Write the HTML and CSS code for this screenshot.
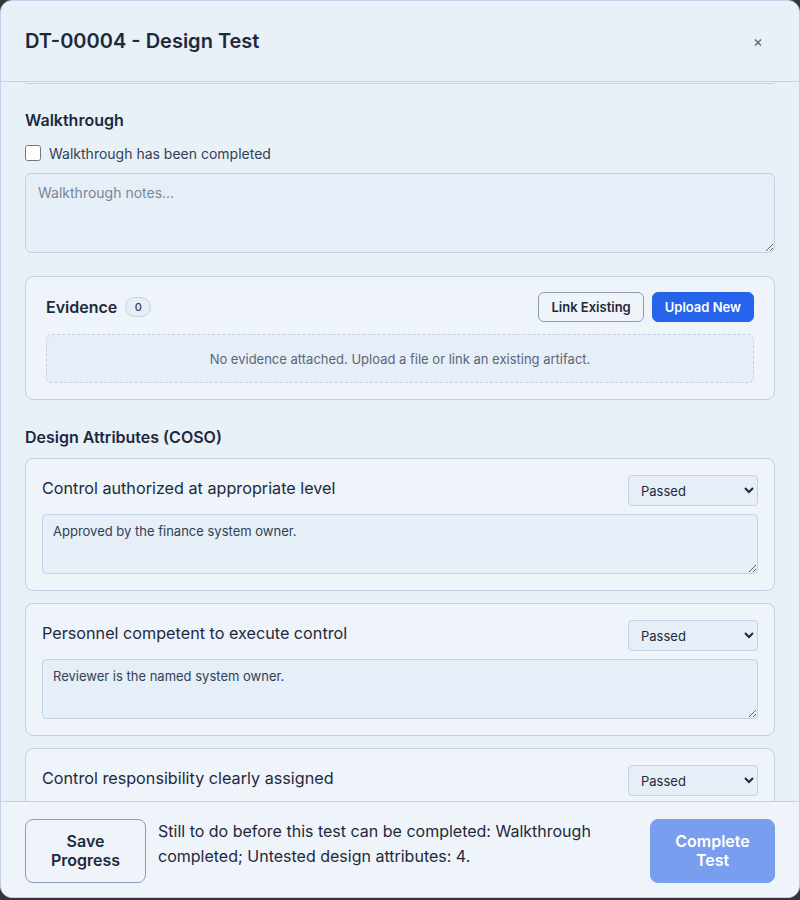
FILE: index.html
```html
<!DOCTYPE html>
<html lang="en">
<head>
    <meta charset="UTF-8">
    <meta name="viewport" content="width=device-width, initial-scale=1.0">
    <title>DT-00004 - Design Test</title>
    <link rel="stylesheet" href="styles.css">
</head>
<body>
    <div class="modal">
        <div class="modal-header">
            <h2 class="modal-title">DT-00004 - Design Test</h2>
            <button class="close-btn" aria-label="Close">&times;</button>
        </div>

        <div class="modal-body">
            <!-- bottom edge of the details card, scrolled up -->
            <div class="card-tail"></div>

            <h3 class="section-title">Walkthrough</h3>
            <label class="check-row">
                <input type="checkbox" id="walkthroughDone">
                <span>Walkthrough has been completed</span>
            </label>
            <textarea class="notes notes-lg" placeholder="Walkthrough notes..."></textarea>

            <div class="card evidence">
                <div class="evidence-head">
                    <div class="evidence-title">
                        <span>Evidence</span>
                        <span class="badge">0</span>
                    </div>
                    <div class="evidence-actions">
                        <button class="btn btn-outline">Link Existing</button>
                        <button class="btn btn-primary">Upload New</button>
                    </div>
                </div>
                <div class="evidence-empty">No evidence attached. Upload a file or link an existing artifact.</div>
            </div>

            <h3 class="section-title attr-heading">Design Attributes (COSO)</h3>
            <div class="attr-list">
                <div class="card attr">
                    <div class="attr-head">
                        <span class="attr-name">Control authorized at appropriate level</span>
                        <select class="attr-status">
                            <option>Untested</option>
                            <option selected>Passed</option>
                            <option>Failed</option>
                        </select>
                    </div>
                    <textarea class="notes">Approved by the finance system owner.</textarea>
                </div>
                <div class="card attr">
                    <div class="attr-head">
                        <span class="attr-name">Personnel competent to execute control</span>
                        <select class="attr-status">
                            <option>Untested</option>
                            <option selected>Passed</option>
                            <option>Failed</option>
                        </select>
                    </div>
                    <textarea class="notes">Reviewer is the named system owner.</textarea>
                </div>
                <div class="card attr">
                    <div class="attr-head">
                        <span class="attr-name">Control responsibility clearly assigned</span>
                        <select class="attr-status">
                            <option>Untested</option>
                            <option selected>Passed</option>
                            <option>Failed</option>
                        </select>
                    </div>
                    <textarea class="notes"></textarea>
                </div>
            </div>
        </div>

        <div class="modal-footer">
            <button class="btn btn-lg btn-outline">Save Progress</button>
            <p class="todo">Still to do before this test can be completed: Walkthrough completed; Untested design attributes: 4.</p>
            <button class="btn btn-lg btn-primary" disabled>Complete Test</button>
        </div>
    </div>
</body>
</html>
```

FILE: styles.css
```css
html, body {
    height: 100%;
}
body {
    margin: 0;
    background: #353535;
    font-family: Inter, "Noto Sans", sans-serif;
    color: #1e293b;
}
.modal {
    box-sizing: border-box;
    height: 898px;
    background: #e8f0f8;
    border: 1px solid #c3d2e6;
    border-radius: 12px;
    overflow: hidden;
    display: flex;
    flex-direction: column;
}
.modal-header {
    height: 80px;
    flex: none;
    padding: 0 27px 0 24px;
    display: flex;
    align-items: center;
    justify-content: space-between;
    border-bottom: 1px solid #c3d2e6;
}
.modal-title {
    margin: 0;
    font-size: 20px;
    font-weight: 600;
    line-height: 28px;
}
.close-btn {
    width: 28px;
    height: 28px;
    padding: 0;
    border: none;
    background: none;
    color: #526074;
    font-size: 15px;
    font-family: inherit;
    cursor: pointer;
}

.modal-body {
    flex: 1;
    overflow: hidden;
    padding: 0 24px;
}
.card-tail {
    height: 1px;
    border: 1px solid #c3d2e6;
    border-top: none;
    border-radius: 0 0 8px 8px;
    background: #eef4fa;
    margin-bottom: 25px;
}
.section-title {
    margin: 0 0 12px;
    font-size: 16px;
    font-weight: 600;
    line-height: 22px;
}
.check-row {
    display: flex;
    align-items: center;
    gap: 8px;
    height: 20px;
    font-size: 14px;
    color: #334155;
    margin-bottom: 10px;
}
.check-row input {
    width: 16px;
    height: 16px;
    margin: 0;
}

.notes {
    display: block;
    box-sizing: border-box;
    width: 100%;
    height: 60px;
    padding: 8px 10px;
    background: #e6eef7;
    border: 1px solid #c3d2e6;
    border-radius: 4px;
    font-family: inherit;
    font-size: 13px;
    color: #334155;
    resize: vertical;
}
.notes-lg {
    height: 80px;
    padding: 10px 12px;
    border-radius: 6px;
    font-size: 14px;
}
.notes::placeholder {
    color: #7a8698;
}

.card {
    background: #eef4fa;
    border: 1px solid #c3d2e6;
    border-radius: 8px;
}
.evidence {
    margin-top: 23px;
    padding: 15px 20px 16px;
}
.evidence-head {
    display: flex;
    align-items: center;
    justify-content: space-between;
    margin-bottom: 12px;
}
.evidence-title {
    display: flex;
    align-items: center;
    gap: 8px;
    font-size: 16px;
    font-weight: 600;
}
.badge {
    min-width: 10px;
    padding: 2px 7px;
    border: 1px solid #c3d2e6;
    border-radius: 10px;
    background: #e6eef7;
    font-size: 11px;
    font-weight: 500;
    line-height: 14px;
    text-align: center;
    color: #334155;
}
.evidence-actions {
    display: flex;
    gap: 8px;
}
.evidence-empty {
    box-sizing: border-box;
    height: 49px;
    display: flex;
    align-items: center;
    justify-content: center;
    border: 1px dashed #c3d2e6;
    border-radius: 6px;
    background: #e6eef7;
    font-size: 13px;
    color: #5b6678;
}

.btn {
    height: 30px;
    padding: 0 12px;
    border-radius: 6px;
    font-family: inherit;
    font-size: 13px;
    font-weight: 600;
    cursor: pointer;
}
.btn-outline {
    background: #eef4fa;
    border: 1px solid #8d9cb2;
    color: #1e293b;
}
.btn-primary {
    background: #2563eb;
    border: 1px solid #2563eb;
    color: #fff;
}
.btn-primary:disabled {
    background: #799ef0;
    border-color: #799ef0;
    cursor: default;
}

.attr-heading {
    margin: 26px 0 10px;
}
.attr-list {
    display: flex;
    flex-direction: column;
    gap: 12px;
}
.attr {
    padding: 16px;
}
.attr-head {
    display: flex;
    align-items: flex-start;
    justify-content: space-between;
    margin-bottom: 8px;
}
.attr-name {
    margin-top: 1px;
    font-size: 16.2px;
    font-weight: 400;
    line-height: 24px;
    color: #1e293b;
}
.attr-status {
    width: 130px;
    height: 31px;
    padding: 0 8px;
    background: #e6eef7;
    border: 1px solid #c3d2e6;
    border-radius: 4px;
    font-family: inherit;
    font-size: 13px;
    color: #1e293b;
}

.modal-footer {
    flex: none;
    display: flex;
    align-items: flex-start;
    gap: 12px;
    padding: 17px 24px 14px;
    background: #eef4fa;
    border-top: 1px solid #c3d2e6;
}
.btn-lg {
    flex: none;
    height: 64px;
    padding: 0 16px;
    border-radius: 8px;
    font-size: 16px;
    line-height: 19px;
}
.btn-lg.btn-outline {
    width: 121px;
}
.btn-lg.btn-primary {
    width: 125px;
}
.todo {
    flex: 1;
    margin: 0;
    font-size: 16px;
    line-height: 25px;
    color: #1e293b;
}
```
